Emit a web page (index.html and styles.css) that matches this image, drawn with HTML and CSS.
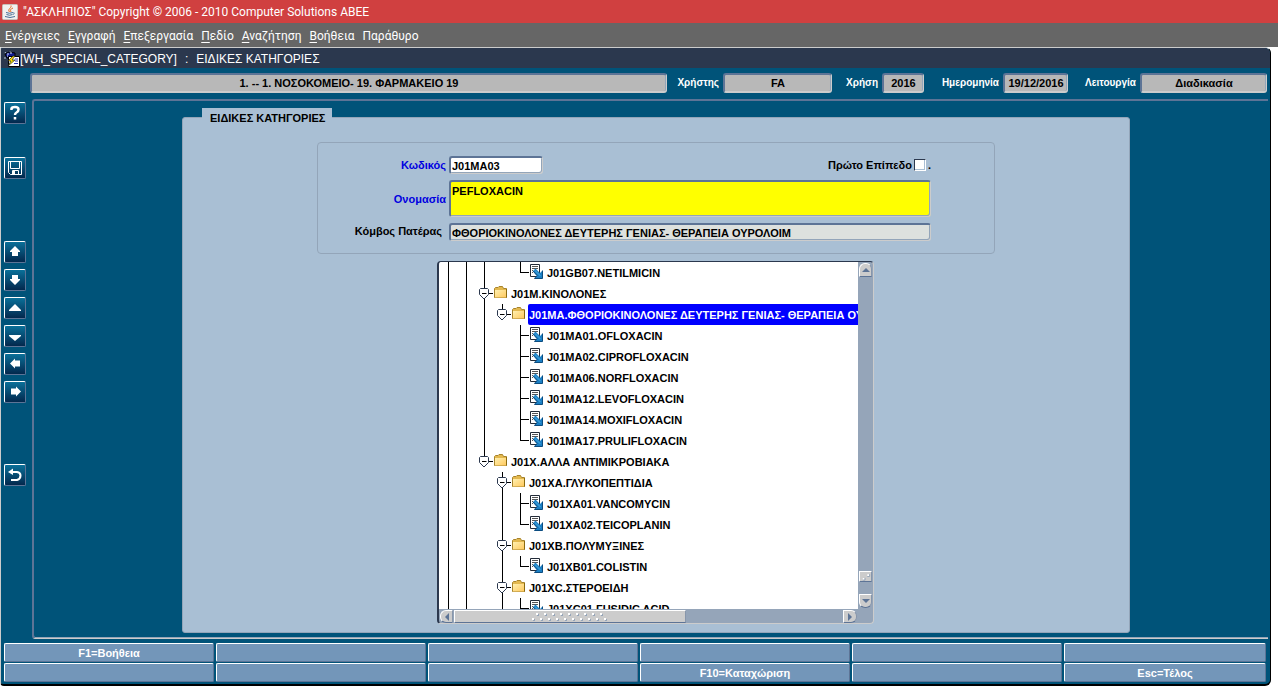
FILE: index.html
```html
<!DOCTYPE html>
<html lang="el">
<head>
<meta charset="utf-8">
<title>"ΑΣΚΛΗΠΙΟΣ"</title>
<link rel="stylesheet" href="styles.css">
</head>
<body>
<svg class="sprite" aria-hidden="true">
  <defs>
    <linearGradient id="folder-fill" x1="0" y1="0" x2="1" y2="1">
      <stop offset="0" stop-color="#fff0b0"/><stop offset="1" stop-color="#ffc95e"/>
    </linearGradient>
  </defs>
  <symbol id="folder" viewBox="0 0 14 13">
    <path d="M.5 2.500 1.500 1.500H4L5 .5H8.500L9.500 2.500H12.500V11.500H.5Z" fill="#e3b84e" stroke="#a8842c"/>
    <path d="M1 4H12V11.500H1Z" fill="url(#folder-fill)"/>
    <path d="M12.500 3V11.500" stroke="#8a6a10" fill="none"/>
  </symbol>
  <symbol id="leaf" viewBox="0 0 13 15">
    <path d="M.5 .5H9.500V12.500H.5Z" fill="#fff" stroke="#222b38"/>
    <path d="M2 2.500H8M2 4.500H8M2 6.500H3M2 8.500H3" stroke="#555"/>
    <path d="M3 7 5.500 4.500 10 9 12.500 6.500V14.500H4.500L7 12Z" fill="#1b7fc4"/>
    <path d="M3 7 7 11.500 4.500 14.500H12.500V6.500" fill="none" stroke="#0b4c80"/>
    <path d="M5 6.500 10.500 12" stroke="#4db0e2"/>
  </symbol>
  <symbol id="expander" viewBox="0 0 14 12">
    <path d="M9 5.500H14" stroke="#000"/>
    <path d="M1.500 .5H8.500L9.500 1.500V6.500L5 11 .5 6.500V1.500Z" fill="#fff" stroke="#2b384e"/>
    <path d="M3 5.500H7.500" stroke="#000"/>
  </symbol>
</svg>

<header class="titlebar">
  <svg class="java" viewBox="0 0 16 16" aria-hidden="true">
    <rect x=".5" y=".5" width="15" height="15" rx="1" fill="#f1f1ef" stroke="#c9c0b8"/>
    <path d="M9 1.500C10 4 5 5 7.500 8M11 4C8.500 5 8 6 9 8" fill="none" stroke="#e2671c"/>
    <path d="M4 8.500Q7.500 10 11 8.500M4.500 10.500Q7.500 12 10.500 10.500M3 12.500Q8 14.500 13 12.500M11.500 8.500Q13.500 9 11 10.500" fill="none" stroke="#456f96"/>
  </svg>
  <span>"ΑΣΚΛΗΠΙΟΣ" Copyright © 2006 - 2010 Computer Solutions ABEE</span>
</header>
<nav class="menubar">
  <button><u>Ε</u>νέργειες</button>
  <button><u>Ε</u>γγραφή</button>
  <button><u>Ε</u>πεξεργασία</button>
  <button><u>Π</u>εδίο</button>
  <button><u>Α</u>ναζήτηση</button>
  <button><u>Β</u>οήθεια</button>
  <button>Παράθυρο</button>
</nav>

<main class="window">
  <h1 class="caption">
    <svg class="form-icon" viewBox="0 0 16 16" aria-hidden="true">
      <path d="M3 4 1 1M6 3V0M2 7H0" stroke="#b9c9df"/>
      <path d="M1 3 5 1 11 2V7H3Z" fill="#101c90" stroke="#000"/>
      <path d="M3 3H5M6 2H8M3 5H4" stroke="#dce6ff"/>
      <path d="M4.500 5.500H15.500V15.500H4.500Z" fill="#fff" stroke="#000"/>
      <path d="M11 8H14M11 10H14M10 12.500H14" stroke="#2530b0"/>
      <path d="M9 5 4 10H7L4 15 11 9H8L11 5Z" fill="#ffe600" stroke="#222" stroke-width=".7"/>
    </svg>
    <span>[WH_SPECIAL_CATEGORY]</span><span>:</span><span>ΕΙΔΙΚΕΣ ΚΑΤΗΓΟΡΙΕΣ</span>
  </h1>

  <div class="status">
    <input class="st-field unit" readonly aria-label="Μονάδα" value="1. -- 1. ΝΟΣΟΚΟΜΕΙΟ- 19. ΦΑΡΜΑΚΕΙΟ 19">
    <label for="user">Χρήστης</label><input class="st-field user" id="user" readonly value="FA">
    <label for="year">Χρήση</label><input class="st-field year" id="year" readonly value="2016">
    <label for="date">Ημερομηνία</label><input class="st-field date" id="date" readonly value="19/12/2016">
    <label for="mode">Λειτουργία</label><input class="st-field mode" id="mode" readonly value="Διαδικασία">
  </div>

  <div class="work">
    <div class="toolbar">
      <button class="tool" aria-label="Βοήθεια"><svg viewBox="0 0 18 18"><path d="M5.500 6V4.500Q6 3 9 3 12.500 3 12.500 5.500 12.500 7.500 10.500 8.500 9 9.300 9 11M9 13V15.500" fill="none" stroke="#fff" stroke-width="2.500"/></svg></button>
      <button class="tool save" aria-label="Αποθήκευση"><svg viewBox="0 0 18 18"><path d="M2.500 2.500H15.500V15.500H4.500L2.500 13.500ZM4.500 3V9.500H13.500V3M6.500 15V11.500H12.500V15" fill="none" stroke="#fff"/><path d="M7 12H9V15H7Z" fill="#fff"/></svg></button>
      <div class="nav-tools">
        <button class="tool" aria-label="Πρώτη"><svg viewBox="0 0 18 18"><path d="M9 3 14 8V9H12V13H6V9H4V8Z" fill="#fff"/></svg></button>
        <button class="tool" aria-label="Τελευταία"><svg viewBox="0 0 18 18"><path d="M9 14 14 9V8H12V4H6V8H4V9Z" fill="#fff"/></svg></button>
        <button class="tool" aria-label="Προηγούμενη"><svg viewBox="0 0 18 18"><path d="M9 5 15 11V12H3V11Z" fill="#fff"/></svg></button>
        <button class="tool" aria-label="Επόμενη"><svg viewBox="0 0 18 18"><path d="M9 14 15 9V8H3V9Z" fill="#fff"/></svg></button>
        <button class="tool" aria-label="Αριστερά"><svg viewBox="0 0 18 18"><path d="M4 8.500 9 3.500V5.500H14V11.500H9V13.500Z" fill="#fff"/></svg></button>
        <button class="tool" aria-label="Δεξιά"><svg viewBox="0 0 18 18"><path d="M15 8.500 10 3.500V5.500H5V11.500H10V13.500Z" fill="#fff"/></svg></button>
      </div>
      <button class="tool" aria-label="Επιστροφή"><svg viewBox="0 0 18 18"><path d="M4 6H11Q14.500 6.500 14.500 9.500 14.500 13 11 14H5" fill="none" stroke="#fff" stroke-width="2"/><path d="M2 6 7 2.500V9Z" fill="#fff"/></svg></button>
    </div>

    <div class="canvas">
      <section class="panel">
        <h2 class="tab">ΕΙΔΙΚΕΣ ΚΑΤΗΓΟΡΙΕΣ</h2>
        <form class="form">
          <label class="key" for="code">Κωδικός</label>
          <div class="code-row">
            <input class="box code" id="code" value="J01MA03">
            <span class="check"><label for="top">Πρώτο Επίπεδο</label><input type="checkbox" id="top"><span>.</span></span>
          </div>
          <label class="key" for="name">Ονομασία</label>
          <textarea class="box name" id="name">PEFLOXACIN</textarea>
          <label class="parent-label" for="parent">Κόμβος Πατέρας</label>
          <input class="box parent" id="parent" readonly value="ΦΘΟΡΙΟΚΙΝΟΛΟΝΕΣ ΔΕΥΤΕΡΗΣ ΓΕΝΙΑΣ- ΘΕΡΑΠΕΙΑ ΟΥΡΟΛΟΙΜ">
        </form>

        <div class="tree-box">
          <ul class="tree" role="tree">
            <li><i class="v"></i><i class="v"></i><i class="v"></i><i></i><i class="end"></i><svg class="leaf"><use href="#leaf"/></svg><span>J01GB07.NETILMICIN</span></li>
            <li><i class="v"></i><i class="v"></i><i class="v"><svg class="exp"><use href="#expander"/></svg></i><svg class="folder"><use href="#folder"/></svg><span>J01M.ΚΙΝΟΛΟΝΕΣ</span></li>
            <li class="selected"><i class="v"></i><i class="v"></i><i class="v"></i><i class="up"><svg class="exp"><use href="#expander"/></svg></i><svg class="folder"><use href="#folder"/></svg><span>J01MA.ΦΘΟΡΙΟΚΙΝΟΛΟΝΕΣ ΔΕΥΤΕΡΗΣ ΓΕΝΙΑΣ- ΘΕΡΑΠΕΙΑ ΟΥΡΟΛΟΙΜ</span></li>
            <li><i class="v"></i><i class="v"></i><i class="v"></i><i></i><i class="tee"></i><svg class="leaf"><use href="#leaf"/></svg><span>J01MA01.OFLOXACIN</span></li>
            <li><i class="v"></i><i class="v"></i><i class="v"></i><i></i><i class="tee"></i><svg class="leaf"><use href="#leaf"/></svg><span>J01MA02.CIPROFLOXACIN</span></li>
            <li><i class="v"></i><i class="v"></i><i class="v"></i><i></i><i class="tee"></i><svg class="leaf"><use href="#leaf"/></svg><span>J01MA06.NORFLOXACIN</span></li>
            <li><i class="v"></i><i class="v"></i><i class="v"></i><i></i><i class="tee"></i><svg class="leaf"><use href="#leaf"/></svg><span>J01MA12.LEVOFLOXACIN</span></li>
            <li><i class="v"></i><i class="v"></i><i class="v"></i><i></i><i class="tee"></i><svg class="leaf"><use href="#leaf"/></svg><span>J01MA14.MOXIFLOXACIN</span></li>
            <li><i class="v"></i><i class="v"></i><i class="v"></i><i></i><i class="end"></i><svg class="leaf"><use href="#leaf"/></svg><span>J01MA17.PRULIFLOXACIN</span></li>
            <li><i class="v"></i><i class="v"></i><i class="up"><svg class="exp"><use href="#expander"/></svg></i><svg class="folder"><use href="#folder"/></svg><span>J01X.ΑΛΛΑ ΑΝΤΙΜΙΚΡΟΒΙΑΚΑ</span></li>
            <li><i class="v"></i><i class="v"></i><i></i><i class="v"><svg class="exp"><use href="#expander"/></svg></i><svg class="folder"><use href="#folder"/></svg><span>J01XA.ΓΛΥΚΟΠΕΠΤΙΔΙΑ</span></li>
            <li><i class="v"></i><i class="v"></i><i></i><i class="v"></i><i class="tee"></i><svg class="leaf"><use href="#leaf"/></svg><span>J01XA01.VANCOMYCIN</span></li>
            <li><i class="v"></i><i class="v"></i><i></i><i class="v"></i><i class="end"></i><svg class="leaf"><use href="#leaf"/></svg><span>J01XA02.TEICOPLANIN</span></li>
            <li><i class="v"></i><i class="v"></i><i></i><i class="v"><svg class="exp"><use href="#expander"/></svg></i><svg class="folder"><use href="#folder"/></svg><span>J01XB.ΠΟΛΥΜΥΞΙΝΕΣ</span></li>
            <li><i class="v"></i><i class="v"></i><i></i><i class="v"></i><i class="end"></i><svg class="leaf"><use href="#leaf"/></svg><span>J01XB01.COLISTIN</span></li>
            <li><i class="v"></i><i class="v"></i><i></i><i class="v"><svg class="exp"><use href="#expander"/></svg></i><svg class="folder"><use href="#folder"/></svg><span>J01XC.ΣΤΕΡΟΕΙΔΗ</span></li>
            <li><i class="v"></i><i class="v"></i><i></i><i class="v"></i><i class="end"></i><svg class="leaf"><use href="#leaf"/></svg><span>J01XC01.FUSIDIC ACID</span></li>
          </ul>
          <div class="vbar">
            <button class="arrow top" aria-label="Πάνω"><svg viewBox="0 0 8 4"><path d="M0 4 4 0 8 4Z"/></svg></button>
            <div class="thumb"><svg viewBox="0 0 12 9"><path d="M3 6H5V8H3ZM8 2H10V4H8Z" fill="#fff"/><path d="M3 8.500H5.500V6M8 4.500H10.500V2" stroke="#95a5b9" fill="none"/></svg></div>
            <button class="arrow bottom" aria-label="Κάτω"><svg viewBox="0 0 8 4"><path d="M0 0H8L4 4Z"/></svg></button>
          </div>
          <div class="hbar">
            <button class="arrow left" aria-label="Αριστερά"><svg viewBox="0 0 4 8"><path d="M4 0V8L0 4Z"/></svg></button>
            <div class="thumb"><span class="grip"></span></div>
            <button class="arrow right" aria-label="Δεξιά"><svg viewBox="0 0 4 8"><path d="M0 0V8L4 4Z"/></svg></button>
          </div>
        </div>
      </section>
    </div>
  </div>

  <footer class="keys">
    <button>F1=Βοήθεια</button><button></button><button></button><button></button><button></button><button></button>
    <button></button><button></button><button></button><button>F10=Καταχώριση</button><button></button><button>Esc=Τέλος</button>
  </footer>
</main>
</body>
</html>
```

FILE: styles.css
```css
* { box-sizing: border-box; }

body {
  margin: 0;
  background: #fff;
  font: bold 11px/14px "Liberation Sans", Arial, sans-serif;
  color: #000;
}

button, input, textarea { font: inherit; color: inherit; margin: 0; }
button { padding: 0; border: 0; background: none; }
.sprite { position: absolute; width: 0; height: 0; }

.titlebar {
  display: flex;
  align-items: center;
  gap: 5px;
  height: 23px;
  padding-left: 2px;
  background: #d04040;
  color: #fff;
  font: 12px/16px Roboto, "Noto Sans", sans-serif;
}
.java { width: 16px; height: 16px; }

.menubar {
  display: flex;
  gap: 8px;
  height: 24px;
  padding-left: 5px;
  background: #666;
  color: #fff;
  font: 12px/24px Roboto, "Noto Sans", sans-serif;
}
.menubar button { padding-top: 1px; }
.menubar u { text-underline-offset: 2px; }

.window {
  margin-right: 7px;
  background: #005379;
  border: 1px solid #000;
  border-width: 1px 1px 2px;
  border-top-color: #ccc;
  border-left-color: #ccc;
  border-radius: 2px 6px 6px 4px;
  overflow: hidden;
}

.caption {
  display: flex;
  align-items: center;
  gap: 8px;
  height: 20px;
  margin: 0;
  padding: 1px 0 0 3px;
  background: #2b384e;
  color: #fff;
  font-size: 12px;
  font-weight: normal;
}
.form-icon { width: 16px; height: 16px; margin-right: -8px; }

.status {
  display: flex;
  align-items: center;
  padding: 5px 3px 6px 29px;
  color: #fff;
  font-size: 10px;
}
.status label { text-align: right; padding-right: 4px; }
.st-field {
  height: 20px;
  min-width: 0;
  padding: 0;
  text-align: center;
  font-size: 11px;
  color: #000;
  background: #b8b8b8;
  border: 2px solid #5d7496;
  border-bottom-color: #ccc;
  border-right: 1px solid #ccc;
  border-radius: 3px;
  box-shadow: inset -1px 0 #93a5b9;
}
.unit { flex: 1; }
.user { width: 109px; }
.year { width: 42px; }
.date { width: 65px; }
.mode { width: 127px; }
.status label[for="user"] { width: 56px; }
.status label[for="year"] { width: 50px; }
.status label[for="date"] { width: 79px; }
.status label[for="mode"] { width: 72px; }

.work { display: flex; gap: 6px; padding: 0 2px 0 3px; }

.toolbar { display: flex; flex-direction: column; padding-top: 3px; }
.nav-tools { display: flex; flex-direction: column; gap: 6px; margin: 62px 0 61px; }
.save { margin-top: 33px; }
.tool {
  display: flex;
  align-items: center;
  justify-content: center;
  width: 22px;
  height: 22px;
  background: linear-gradient(#0a7099, #03284d);
  border: 1px solid #fff;
  border-right-color: #5d7496;
  border-bottom-color: #5d7496;
  border-radius: 2px;
}
.tool svg { width: 18px; height: 18px; }

.canvas {
  flex: 1;
  padding: 16px 138px 5px 148px;
  border: 2px solid #5d7496;
  border-right: 0;
  border-bottom: 1px solid #ccc;
  border-radius: 3px 0 0 3px;
  box-shadow: inset 0 -1px #93a5b9;
}

.panel {
  position: relative;
  display: flex;
  flex-direction: column;
  align-items: center;
  gap: 7px;
  padding: 24px 0 8px;
  background: #a9bfd4;
  border: 1px solid #93a5b9;
  border-radius: 3px;
}
.tab {
  position: absolute;
  top: -10px;
  left: 19px;
  width: 130px;
  margin: 0;
  padding: 3px 0 0 8px;
  background: #a9bfd4;
  font-size: 11px;
}

.form {
  display: grid;
  grid-template-columns: 128px 1fr;
  column-gap: 3px;
  row-gap: 6px;
  align-items: center;
  width: 678px;
  max-width: 100%;
  padding: 13px 63px 12px 0;
  border: 1px solid #93a5b9;
  border-radius: 4px;
}
.form > label { text-align: right; }
.key { color: #0000e0; }
.form > .parent-label { padding: 0 4px 2px 0; }
.code-row { display: flex; justify-content: space-between; align-items: center; }
.box {
  height: 18px;
  padding: 1px 1px 0;
  border: 2px solid #5d7496;
  border-right: 1px solid #ccc;
  border-bottom: 1px solid #ccc;
  border-radius: 3px;
  background: #fff;
  box-shadow: inset -1px -1px #93a5b9;
}
.code { width: 94px; }
.name { display: block; width: 100%; height: 37px; padding-top: 2px; resize: none; background: #ff0; overflow: hidden; }
.parent { width: 100%; background: #dde1de; }
.check { display: flex; align-items: center; gap: 2px; }
.check input {
  appearance: none;
  width: 12px;
  height: 12px;
  background: #fff;
  border: 1px solid #2b384e;
  border-right-color: #fff;
  border-bottom-color: #fff;
  box-shadow: inset -1px -1px #a9bfd4;
}

.tree-box {
  display: grid;
  grid-template-columns: 1fr 15px;
  grid-template-rows: 347px 14px;
  width: 437px;
  max-width: 100%;
  margin-right: 1px;
  background: #95a5b9;
  border: 2px solid #2b384e;
  border-right: 1px solid #ccc;
  border-bottom: 1px solid #ccc;
  border-top-width: 1px;
  border-radius: 4px;
  overflow: hidden;
}
.tree { margin: 0; padding: 0; list-style: none; overflow: hidden; background: #fff; }
.tree li { display: flex; height: 21px; }
.tree li > * { flex: none; }
.tree span { padding: 0 1px; line-height: 22px; white-space: nowrap; }
.tree i { position: relative; width: 18px; height: 21px; background: no-repeat 9px 0; }
.tree .v { background-image: linear-gradient(#000, #000); background-size: 1px 21px; }
.tree .up { background-image: linear-gradient(#000, #000); background-size: 1px 11px; }
.tree .tee, .tree .end {
  background-image: linear-gradient(#000, #000), linear-gradient(#000, #000);
  background-position: 9px 0, 9px 10px;
}
.tree .tee { background-size: 1px 21px, 9px 1px; }
.tree .end { background-size: 1px 11px, 9px 1px; }
.exp { position: absolute; left: 4px; top: 5px; width: 14px; height: 12px; }
.folder { width: 14px; height: 13px; margin: 3px 2px 0 1px; }
.leaf { width: 13px; height: 15px; margin: 2px 3px 0 1px; }
.tree .selected span { flex: 1 0 auto; background: #00f; color: #fff; border-radius: 2px; }

.arrow, .thumb {
  display: flex;
  align-items: center;
  justify-content: center;
  width: 13px;
  height: 13px;
  background: #ccc;
  border: 1px solid #fff;
  border-right-color: #8796ab;
  border-bottom-color: #5d7496;
}
.arrow svg { fill: #5d7496; }
.top svg, .bottom svg { width: 8px; height: 4px; }
.left svg, .right svg { width: 4px; height: 8px; }
.top { border-radius: 6px 6px 0 0; height: 14px; }
.bottom { border-radius: 0 0 6px 6px; height: 14px; }
.left { border-radius: 6px 0 0 6px; }
.right { border-radius: 0 6px 6px 0; width: 14px; }
.vbar { display: flex; flex-direction: column; padding: 1px; }
.vbar .thumb { height: 11px; margin-top: auto; margin-bottom: 12px; }
.vbar .thumb svg { width: 12px; height: 9px; }
.hbar { display: flex; padding: 1px 1px 0; }
.hbar .thumb { width: 232px; margin-left: 1px; margin-right: auto; }
.grip {
  width: 76px;
  height: 8px;
  background:
    linear-gradient(90deg, #fff 2px, transparent 2px) 4px 0 / 8px 2px repeat-x,
    linear-gradient(90deg, #fff 2px, transparent 2px) 0 5px / 8px 2px repeat-x,
    linear-gradient(90deg, #95a5b9 2px, transparent 2px) 5px 1px / 8px 2px repeat-x,
    linear-gradient(90deg, #95a5b9 2px, transparent 2px) 1px 6px / 8px 2px repeat-x;
}

.keys {
  display: grid;
  grid-template-columns: repeat(5, 105fr) 101fr;
  gap: 1px 2px;
  padding: 4px 4px 2px 3px;
}
.keys button {
  height: 19px;
  color: #fff;
  background: #7396b9;
  border: 1px solid #fff;
  border-right-color: #5d7496;
  border-bottom-color: #5d7496;
  border-radius: 2px;
}
```
